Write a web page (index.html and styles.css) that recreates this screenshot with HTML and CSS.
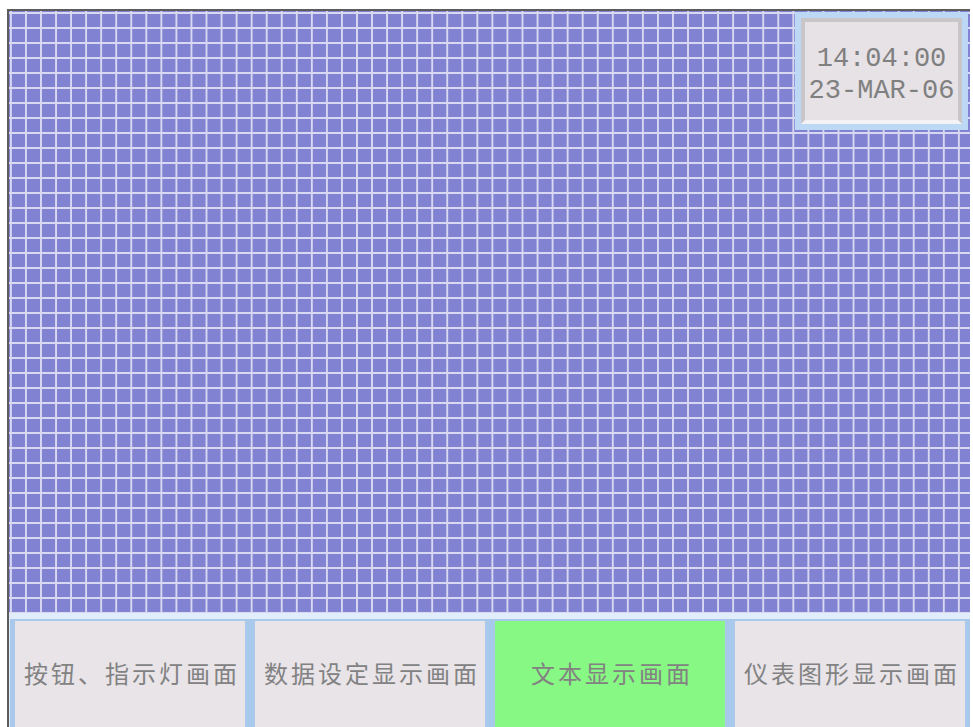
FILE: index.html
```html
<!DOCTYPE html>
<html lang="zh-CN">
<head>
    <meta charset="UTF-8">
    <meta name="viewport" content="width=device-width, initial-scale=1.0">
    <title>触摸屏主画面</title>
    <link rel="stylesheet" href="styles.css">
</head>
<body>
    <div class="screen">
        <!-- 网格画布 -->
        <div class="canvas">
            <div class="clock">
                <div class="clock-face">
                    <div>14:04:00</div>
                    <div>23-MAR-06</div>
                </div>
            </div>
        </div>

        <!-- 底部切换按钮 -->
        <div class="nav">
            <div class="nav-btn">按钮、指示灯画面</div>
            <div class="nav-btn">数据设定显示画面</div>
            <div class="nav-btn active">文本显示画面</div>
            <div class="nav-btn">仪表图形显示画面</div>
        </div>
    </div>
</body>
</html>
```

FILE: styles.css
```css
html, body {
    margin: 0;
    padding: 0;
    background: #ffffff;
}

.screen {
    margin: 9px 3px 0 7px;
    height: 718px;
    border-top: 2px solid #5c5c5c;
    border-left: 2px solid #5c5c5c;
    display: flex;
    flex-direction: column;
}

.canvas {
    position: relative;
    height: 602px;
    background-color: #8282d2;
    background-image:
        linear-gradient(to right, #d8d8f2 2px, transparent 2px),
        linear-gradient(to bottom, #d8d8f2 2px, transparent 2px);
    background-size: 15.06px 15px;
    background-position: 16px 16px;
}

/* часы в углу */
.clock {
    position: absolute;
    top: 1px;
    right: 2px;
    width: 161px;
    height: 106px;
    padding: 6px;
    background: #bcd8f4;
}

.clock-face {
    box-sizing: border-box;
    height: 100%;
    border: 4px solid #c8c6c8;
    border-bottom-color: #f4f2f4;
    background: #e6e2e6;
    color: #808080;
    font-family: "Liberation Mono", "DejaVu Sans Mono", monospace;
    font-size: 27px;
    line-height: 32px;
    text-align: center;
    padding-top: 21px;
}

.nav {
    flex: 1;
    display: grid;
    grid-template-columns: repeat(4, 1fr);
    background: #e2edfb;
    padding-top: 6px;
    padding-left: 1px;
}

.nav-btn {
    display: flex;
    align-items: center;
    justify-content: center;
    background: #e8e4e8;
    border: 5px solid #a8c8ec;
    border-top-width: 2px;
    border-bottom-width: 0;
    color: #828282;
    font-family: "Noto Sans CJK SC", "Noto Sans", sans-serif;
    font-size: 24px;
    letter-spacing: 3px;
    padding: 0 0 6px 4px;
    white-space: nowrap;
}

.nav-btn.active {
    background: #88f884;
}
```
